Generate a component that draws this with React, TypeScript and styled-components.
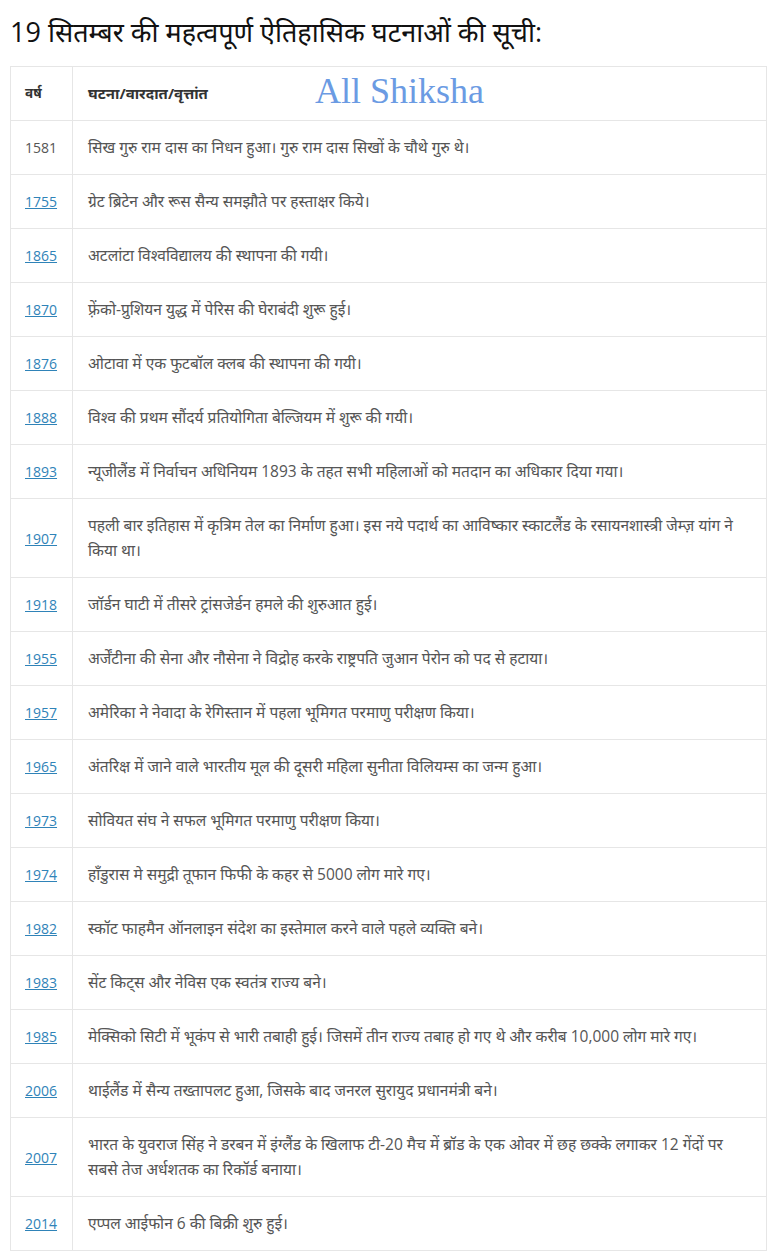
import React from 'react';
import styled, { createGlobalStyle } from 'styled-components';

const GlobalStyle = createGlobalStyle`
  body {
    margin: 0;
    background: #fff;
    font-family: "Open Sans", "Noto Sans", "Noto Sans Devanagari", sans-serif;
  }
`;

const Page = styled.div`
  padding: 13px 3px 0 10px;
`;

const Title = styled.h2`
  margin: 0 0 16px;
  font-size: 27px;
  font-weight: 400;
  line-height: 37px;
  color: #111;
`;

const Table = styled.table`
  width: 757px;
  border-collapse: collapse;
  border: 1px solid #e6e6e6;
`;

const HeadCell = styled.th<{ $year?: boolean }>`
  position: relative;
  text-align: left;
  font-size: ${p => (p.$year ? '13.5px' : '15px')};
  font-weight: 700;
  color: #333;
  line-height: 25px;
  padding: 14px 15px 14px ${p => (p.$year ? '14px' : '15px')};
  border: 1px solid #e6e6e6;
  width: ${p => (p.$year ? '29px' : 'auto')};
`;

const Cell = styled.td<{ $year?: boolean }>`
  font-size: ${p => (p.$year ? '14px' : '15.5px')};
  color: #555;
  line-height: 25px;
  padding: 14px 15px 14px ${p => (p.$year ? '14px' : '15px')};
  border: 1px solid #e6e6e6;
  vertical-align: middle;
  width: ${p => (p.$year ? '29px' : 'auto')};
`;

const YearLink = styled.a`
  color: #2f83b8;
  text-decoration: underline;
`;

const Watermark = styled.span`
  position: absolute;
  left: 242px;
  top: 12px;
  font-family: "Liberation Serif", serif;
  font-weight: 400;
  font-size: 36px;
  color: #6b9be3;
  pointer-events: none;
`;

const events: { year: string; text: string; link?: boolean }[] = [
  { year: '1581', text: 'सिख गुरु राम दास का निधन हुआ। गुरु राम दास सिखों के चौथे गुरु थे।', link: false },
  { year: '1755', text: 'ग्रेट ब्रिटेन और रूस सैन्य समझौते पर हस्ताक्षर किये।' },
  { year: '1865', text: 'अटलांटा विश्वविद्यालय की स्थापना की गयी।' },
  { year: '1870', text: 'फ़्रेंको-प्रुशियन युद्ध में पेरिस की घेराबंदी शुरू हुई।' },
  { year: '1876', text: 'ओटावा में एक फुटबॉल क्लब की स्थापना की गयी।' },
  { year: '1888', text: 'विश्व की प्रथम सौंदर्य प्रतियोगिता बेल्जियम में शुरू की गयी।' },
  { year: '1893', text: 'न्यूजीलैंड में निर्वाचन अधिनियम 1893 के तहत सभी महिलाओं को मतदान का अधिकार दिया गया।' },
  { year: '1907', text: 'पहली बार इतिहास में कृत्रिम तेल का निर्माण हुआ। इस नये पदार्थ का आविष्कार स्काटलैंड के रसायनशास्त्री जेम्ज़ यांग ने किया था।' },
  { year: '1918', text: 'जॉर्डन घाटी में तीसरे ट्रांसजेर्डन हमले की शुरुआत हुई।' },
  { year: '1955', text: 'अर्जेंटीना की सेना और नौसेना ने विद्रोह करके राष्ट्रपति जुआन पेरोन को पद से हटाया।' },
  { year: '1957', text: 'अमेरिका ने नेवादा के रेगिस्तान में पहला भूमिगत परमाणु परीक्षण किया।' },
  { year: '1965', text: 'अंतरिक्ष में जाने वाले भारतीय मूल की दूसरी महिला सुनीता विलियम्स का जन्म हुआ।' },
  { year: '1973', text: 'सोवियत संघ ने सफल भूमिगत परमाणु परीक्षण किया।' },
  { year: '1974', text: 'हॉंडुरास मे समुद्री तूफान फिफी के कहर से 5000 लोग मारे गए।' },
  { year: '1982', text: 'स्कॉट फाहमैन ऑनलाइन संदेश का इस्तेमाल करने वाले पहले व्यक्ति बने।' },
  { year: '1983', text: 'सेंट किट्स और नेविस एक स्वतंत्र राज्य बने।' },
  { year: '1985', text: 'मेक्सिको सिटी में भूकंप से भारी तबाही हुई। जिसमें तीन राज्य तबाह हो गए थे और करीब 10,000 लोग मारे गए।' },
  { year: '2006', text: 'थाईलैंड में सैन्य तख्तापलट हुआ, जिसके बाद जनरल सुरायुद प्रधानमंत्री बने।' },
  { year: '2007', text: 'भारत के युवराज सिंह ने डरबन में इंग्लैंड के खिलाफ टी-20 मैच में ब्रॉड के एक ओवर में छह छक्के लगाकर 12 गेंदों पर सबसे तेज अर्धशतक का रिकॉर्ड बनाया।' },
  { year: '2014', text: 'एप्पल आईफोन 6 की बिक्री शुरु हुई।' },
];

const App: React.FC = () => {
  return (
    <Page>
      <GlobalStyle />
      <Title>19 सितम्बर की महत्वपूर्ण ऐतिहासिक घटनाओं की सूची:</Title>
      <Table>
        <thead>
          <tr>
            <HeadCell $year>वर्ष</HeadCell>
            <HeadCell>
              घटना/वारदात/वृत्तांत
              <Watermark>All Shiksha</Watermark>
            </HeadCell>
          </tr>
        </thead>
        <tbody>
          {events.map(e => (
            <tr key={e.year}>
              <Cell $year>
                {e.link === false ? e.year : <YearLink href="#">{e.year}</YearLink>}
              </Cell>
              <Cell>{e.text}</Cell>
            </tr>
          ))}
        </tbody>
      </Table>
    </Page>
  );
};

export default App;
